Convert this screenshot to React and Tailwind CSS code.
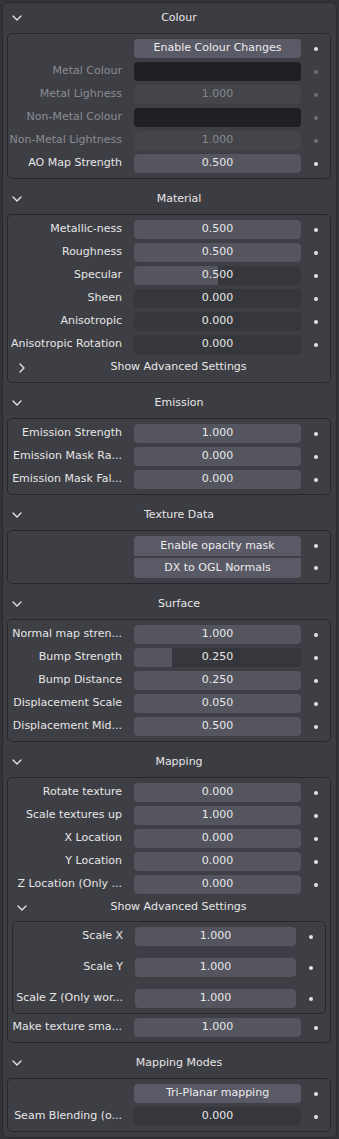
import React from "react";

const FONT = { fontFamily: '"DejaVu Sans", "Liberation Sans", sans-serif' };

function ChevDown() {
  return (
    <svg width="10" height="6" viewBox="0 0 10 6" className="block">
      <polyline points="1,1 5,5 9,1" fill="none" stroke="#e8e8e8" strokeWidth="1.3" strokeLinecap="round" strokeLinejoin="round" />
    </svg>
  );
}
function ChevRight() {
  return (
    <svg width="6" height="10" viewBox="0 0 6 10" className="block">
      <polyline points="1,1 5,5 1,9" fill="none" stroke="#e8e8e8" strokeWidth="1.3" strokeLinecap="round" strokeLinejoin="round" />
    </svg>
  );
}

function Header({ title }) {
  return (
    <div className="flex items-center h-[30px]">
      <div className="w-[19px] shrink-0 flex justify-end">
        <ChevDown />
      </div>
      <div className="flex-1 text-center text-[11px] text-[#e6e6e6]">{title}</div>
    </div>
  );
}

function SubToggle({ title, open }) {
  return (
    <div className="flex items-center h-[19px]">
      <div className="w-[19px] shrink-0 flex justify-end">
        {open ? <ChevDown /> : <div className="pr-[2px]"><ChevRight /></div>}
      </div>
      <div className="flex-1 text-center text-[11px] text-[#e6e6e6]">{title}</div>
    </div>
  );
}

function Dot({ disabled }) {
  return (
    <div className="flex-1 flex justify-center">
      <div className={`w-[4px] h-[4px] rounded-full ${disabled ? "bg-[#6f7076]" : "bg-[#e4e4e4]"}`} />
    </div>
  );
}

function Slider({ value, fill = 1, wide = true }) {
  return (
    <div className={`relative ${wide ? "w-[167px]" : "w-[161px]"} h-[19px] rounded-[4px] bg-[#36373d] overflow-hidden`}>
      {fill > 0 && (
        <div className="absolute left-0 top-0 bottom-0 bg-[#54555e]" style={{ width: `${fill * 100}%` }} />
      )}
      <div className="relative h-full flex items-center justify-center text-[11px] text-[#e8e8e8]">{value}</div>
    </div>
  );
}

function Row({ label, value, fill = 1, disabled, color, button, inner, pos }) {
  let field;
  if (color) {
    field = <div className="w-[167px] h-[19px] rounded-[4px] bg-[#1f2023]" />;
  } else if (button) {
    const r = pos === "top" ? "rounded-t-[4px]" : pos === "bottom" ? "rounded-b-[4px]" : "rounded-[4px]";
    field = (
      <div className={`w-[167px] ${pos ? "h-[20px]" : "h-[19px]"} ${r} bg-[#5a5a67] flex items-center justify-center text-[11px] text-[#ececec]`}>
        {button}
      </div>
    );
  } else if (disabled) {
    field = (
      <div className="w-[167px] h-[19px] rounded-[4px] bg-[#44454b] flex items-center justify-center text-[11px] text-[#86878c]">
        {value}
      </div>
    );
  } else {
    field = <Slider value={value} fill={fill} wide={!inner} />;
  }
  return (
    <div className="flex items-center">
      <div
        className={`${inner ? "w-[122px]" : "w-[126px]"} shrink-0 pr-[12px] text-right whitespace-nowrap overflow-hidden text-[11px] ${
          disabled ? "text-[#8a8b90]" : "text-[#e6e6e6]"
        }`}
      >
        {label || "\u00a0"}
      </div>
      {field}
      <Dot disabled={disabled} />
    </div>
  );
}

function Box({ children, gap = "gap-[4px]", className = "" }) {
  return (
    <div className={`border border-[#27282c] rounded-[5px] bg-[#3e3f45] pt-[5px] pb-[5px] flex flex-col ${gap} ${className}`}>
      {children}
    </div>
  );
}

function Section({ title, children, boxGap }) {
  return (
    <div>
      <Header title={title} />
      <div className="ml-[4px] mr-[5px] mb-[5px]">
        <Box gap={boxGap}>{children}</Box>
      </div>
    </div>
  );
}

export default function App() {
  return (
    <div className="w-[339px] min-h-[1139px] bg-[#33343a] pt-[2px]" style={FONT}>
      <div className="ml-[2px] w-[335px] border border-[#28292d] rounded-[6px] bg-[#3c3d43]">
        <Section title="Colour">
          <Row button="Enable Colour Changes" />
          <Row label="Metal Colour" color disabled />
          <Row label="Metal Lighness" value="1.000" disabled />
          <Row label="Non-Metal Colour" color disabled />
          <Row label="Non-Metal Lightness" value="1.000" disabled />
          <Row label="AO Map Strength" value="0.500" />
        </Section>

        <Section title="Material">
          <Row label="Metallic-ness" value="0.500" />
          <Row label="Roughness" value="0.500" />
          <Row label="Specular" value="0.500" fill={0.5} />
          <Row label="Sheen" value="0.000" fill={0} />
          <Row label="Anisotropic" value="0.000" fill={0} />
          <Row label="Anisotropic Rotation" value="0.000" fill={0} />
          <SubToggle title="Show Advanced Settings" />
        </Section>

        <Section title="Emission">
          <Row label="Emission Strength" value="1.000" />
          <Row label="Emission Mask Ra..." value="0.000" />
          <Row label="Emission Mask Fal..." value="0.000" />
        </Section>

        <Section title="Texture Data" boxGap="gap-[2px]">
          <Row button="Enable opacity mask" pos="top" />
          <Row button="DX to OGL Normals" pos="bottom" />
        </Section>

        <Section title="Surface">
          <Row label="Normal map stren..." value="1.000" />
          <Row label="Bump Strength" value="0.250" fill={0.23} />
          <Row label="Bump Distance" value="0.250" />
          <Row label="Displacement Scale" value="0.050" />
          <Row label="Displacement Mid..." value="0.500" />
        </Section>

        <Section title="Mapping">
          <Row label="Rotate texture" value="0.000" />
          <Row label="Scale textures up" value="1.000" />
          <Row label="X Location" value="0.000" />
          <Row label="Y Location" value="0.000" />
          <Row label="Z Location (Only ..." value="0.000" />
          <SubToggle title="Show Advanced Settings" open />
          <div className="mx-[4px]">
            <Box gap="gap-[12px]">
              <Row label="Scale X" value="1.000" inner />
              <Row label="Scale Y" value="1.000" inner />
              <Row label="Scale Z (Only wor..." value="1.000" inner />
            </Box>
          </div>
          <Row label="Make texture sma..." value="1.000" />
        </Section>

        <Section title="Mapping Modes">
          <Row button="Tri-Planar mapping" />
          <Row label="Seam Blending (o..." value="0.000" fill={0} />
        </Section>
      </div>
    </div>
  );
}
